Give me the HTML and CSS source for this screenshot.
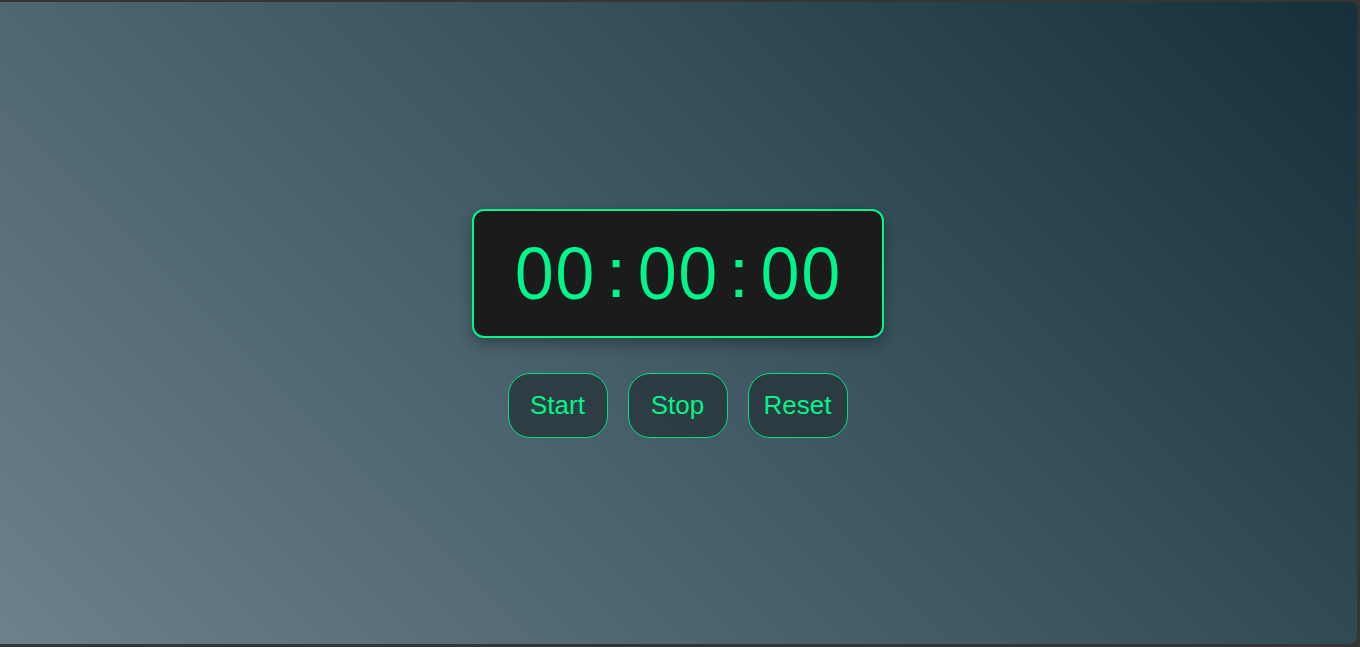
FILE: index.html
```html
<!DOCTYPE html>
<html>
<head>
<meta charset="utf-8">
<link rel="stylesheet" href="styles.css">
</head>
<body>
<div class="frame">
  <main class="app">
    <div class="display">
      <span class="unit">00</span><span class="colon">:</span><span class="unit">00</span><span class="colon">:</span><span class="unit">00</span>
    </div>
    <div class="buttons">
      <button class="btn">Start</button>
      <button class="btn">Stop</button>
      <button class="btn">Reset</button>
    </div>
  </main>
</div>
</body>
</html>
```
FILE: styles.css
```css
html, body {
  margin: 0;
  height: 100%;
}
body {
  background: #353535;
  padding: 2px 3px 3px 0;
  box-sizing: border-box;
}
.frame {
  height: 100%;
  border-radius: 0 6px 8px 0;
  background: linear-gradient(45deg, #6b818d 0%, #15303a 100%);
  display: flex;
  align-items: center;
  justify-content: center;
}
.app {
  display: flex;
  flex-direction: column;
  align-items: center;
  gap: 35px;
  margin-right: 2px;
}
.display {
  width: 408px;
  height: 125px;
  box-sizing: content-box;
  border: 2px solid #00f58a;
  border-radius: 12px;
  background: #1b1b1b;
  box-shadow: 0 6px 14px rgba(0, 0, 0, 0.3);
  display: flex;
  align-items: center;
  justify-content: center;
  color: #00f58a;
  font-family: "Open Sans", sans-serif;
  font-size: 71px;
  line-height: 1;
}
.unit {
  position: relative;
  top: -2px;
}
.colon {
  font-family: "Liberation Sans", Arial, sans-serif;
  margin: 0 11px;
  position: relative;
  top: -1px;
}
.buttons {
  display: flex;
  gap: 20px;
}
.btn {
  width: 100px;
  height: 65px;
  border: 1px solid #00e080;
  border-radius: 22px;
  background: rgba(40, 52, 58, 0.8);
  color: #00f58a;
  font-family: "Liberation Sans", Arial, sans-serif;
  font-size: 26px;
  padding: 0;
}
```
